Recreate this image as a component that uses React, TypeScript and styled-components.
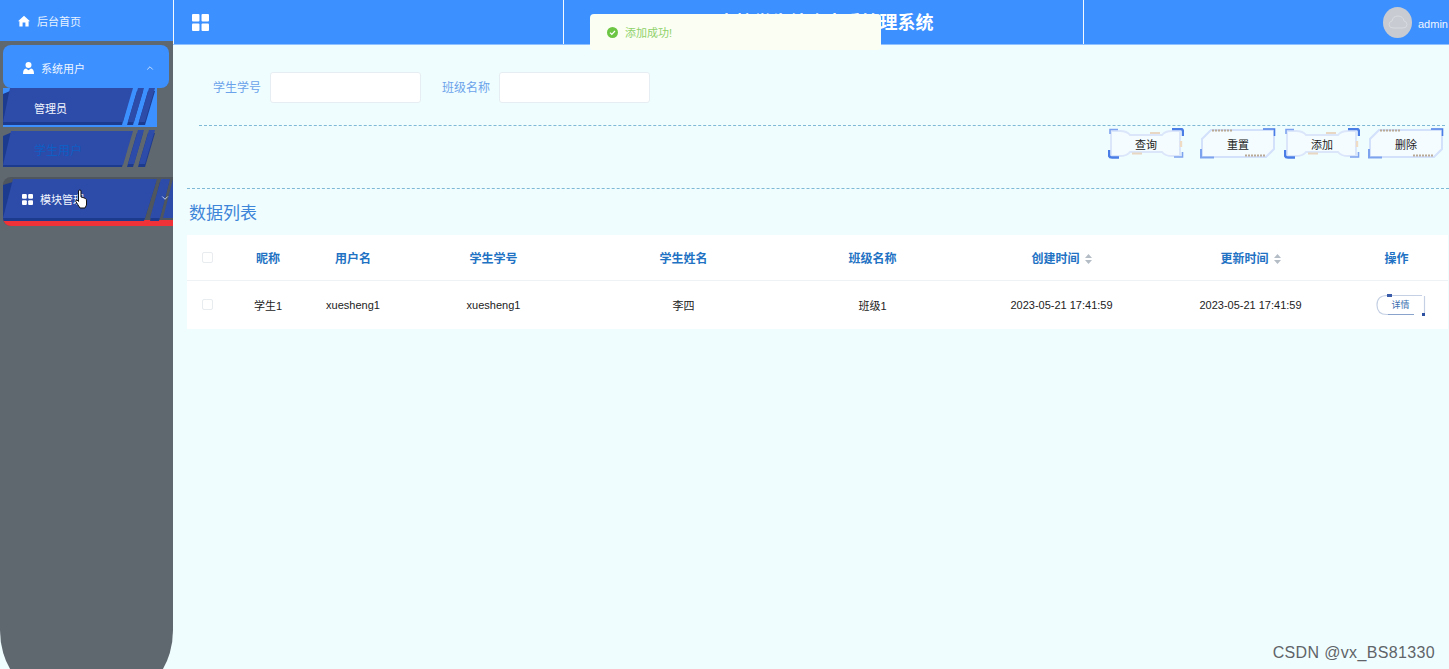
import React from "react";
import styled, { createGlobalStyle } from "styled-components";
import { ChevronDown, ChevronUp } from "lucide-react";

const Global = createGlobalStyle`
  html, body { margin: 0; padding: 0; height: 100%; overflow: hidden; background: #f0fdff; }
  body { font-family: "Liberation Sans", "Noto Sans CJK SC", sans-serif; }
  * { box-sizing: border-box; }
`;

const Page = styled.div`
  position: relative;
  display: flex;
  width: 1449px;
  height: 669px;
  overflow: hidden;
  background: #f0fdff;
`;

const Sidebar = styled.aside`
  flex: 0 0 173px;
  height: 690px;
  background: #5f676f;
  border-radius: 0 0 42px 42px / 0 0 60px 60px;
  color: #fff;
`;

const HomeBar = styled.div`
  display: flex;
  align-items: center;
  gap: 7px;
  height: 41px;
  padding-left: 18px;
  background: #3c90ff;
  font-size: 11px;
  color: #e8f2ff;
`;

const MenuGroup = styled.div`
  padding: 4px 4px 0 3px;
`;

const MenuHead = styled.div`
  display: flex;
  align-items: center;
  height: 43px;
  padding: 3px 14px 0 20px;
  gap: 7px;
  background: #3c90ff;
  border-radius: 8px;
  font-size: 11px;
  color: #eef5ff;
  & > span { flex: 1; }
`;

const SubItem = styled.div<{ $active?: boolean }>`
  position: relative;
  display: flex;
  align-items: center;
  width: 154px;
  height: 39px;
  margin-bottom: 3px;
  padding: 0 0 0 31px;
  background: ${(p) => (p.$active ? "#3c90ff" : "transparent")};
  color: ${(p) => (p.$active ? "#f2f6ff" : "#0f5fc4")};
  font-size: ${(p) => (p.$active ? "11px" : "12px")};
  & > span { position: relative; }
`;

const Drawing = styled.svg`
  position: absolute;
  left: 0;
  top: 0;
`;

const ModuleItem = styled.div`
  position: relative;
  display: flex;
  align-items: center;
  gap: 7px;
  width: 170px;
  height: 49px;
  margin: 8px 0 0 3px;
  padding: 0 0 5px 19px;
  overflow: hidden;
  background: #4f565d;
  border-radius: 8px 0 0 8px;
  font-size: 11px;
  color: #f2f6ff;
  & > span, & > svg.fg { position: relative; }
`;

const ModuleChevron = styled(ChevronDown)`
  position: absolute !important;
  left: 157px;
  top: 16px;
`;

const Cursor = styled.svg`
  position: absolute;
  left: 75px;
  top: 189px;
`;

const Main = styled.main`
  flex: 1;
  min-width: 0;
  display: flex;
  flex-direction: column;
`;

const Header = styled.header`
  display: flex;
  height: 45px;
  background: #3c90ff;
  border-bottom: 1px solid #8fc0ff;
  color: #fff;
`;

const HeaderCell = styled.div<{ $w: number }>`
  flex: 0 0 ${(p) => p.$w}px;
  display: flex;
  align-items: center;
  border-left: 1px solid #f4f9ff;
`;

const MenuCell = styled(HeaderCell)`
  padding-left: 18px;
`;

const TitleCell = styled(HeaderCell)`
  justify-content: center;
  padding: 0 0 3px 4px;
  font-size: 18px;
  font-weight: 700;
`;

const UserCell = styled(HeaderCell)`
  justify-content: flex-end;
  gap: 6px;
  font-size: 11px;
  color: #eef5ff;
  white-space: nowrap;
`;

const Avatar = styled.div`
  width: 29px;
  height: 31px;
  display: flex;
  align-items: center;
  justify-content: center;
  border-radius: 50%;
  background: #c8ccd2;
`;

const AdminName = styled.span`
  width: 31px;
  padding-top: 3px;
`;

const Toast = styled.div`
  position: absolute;
  left: 590px;
  top: 14px;
  width: 291px;
  height: 36px;
  display: flex;
  align-items: center;
  gap: 7px;
  padding-left: 17px;
  background: #fbfff3;
  border-radius: 4px;
  color: #8fd16a;
  font-size: 11px;
`;

const SearchForm = styled.div`
  display: flex;
  margin: 27px 0 0 40px;
`;

const Field = styled.label`
  display: flex;
  align-items: center;
  margin-right: 21px;
  font-size: 12px;
  color: #6ba3ea;
  & > span { margin-right: 9px; padding-bottom: 2px; }
`;

const TextInput = styled.input`
  width: 151px;
  height: 31px;
  border: 1px solid #e6eef3;
  border-radius: 3px;
  background: #fff;
  outline: none;
`;

const Dashed = styled.div<{ $left: number; $right: number; $top: number }>`
  margin: ${(p) => p.$top}px ${(p) => p.$right}px 0 ${(p) => p.$left}px;
  border-top: 1px dashed #7fb9d6;
  height: 1px;
`;

const Actions = styled.div`
  display: flex;
  justify-content: flex-end;
  gap: 8px;
  height: 31px;
  margin-top: 2px;
  padding-right: 5px;
  & > :first-child { margin-right: 8px; }
`;

const FancyButton = styled.button`
  position: relative;
  width: 76px;
  height: 31px;
  padding: 1px 0 0;
  border: 0;
  background: transparent;
  font: 11px "Liberation Sans", "Noto Sans CJK SC", sans-serif;
  color: #222;
  & > span { position: relative; }
`;

const SectionTitle = styled.h2`
  margin: 13px 0 9px 16px;
  font-size: 17px;
  line-height: 24px;
  font-weight: 400;
  color: #3d85d8;
`;

const TableWrap = styled.div`
  margin-left: 14px;
`;

const DataTable = styled.table`
  width: 1261px;
  table-layout: fixed;
  border-collapse: collapse;
  background: #fff;
`;

const Th = styled.th<{ $w?: number }>`
  width: ${(p) => (p.$w ? `${p.$w}px` : "auto")};
  height: 45px;
  padding: 0;
  border-bottom: 1px solid #eef2f5;
  font-size: 12px;
  font-weight: 700;
  color: #2272c4;
  text-align: center;
`;

const Td = styled.td`
  height: 49px;
  padding: 0;
  font-size: 11px;
  color: #222;
  text-align: center;
`;

const Check = styled.span`
  display: block;
  width: 11px;
  height: 11px;
  margin-left: 15px;
  border: 1px solid #e8ecef;
  border-radius: 2px;
  background: #fff;
`;

const Sort = styled.svg`
  margin-left: 5px;
  vertical-align: -1px;
`;

const DetailButton = styled.button`
  position: relative;
  width: 50px;
  height: 22px;
  margin-left: 8px;
  padding: 0;
  border: 0;
  background: transparent;
  font: 9px "Liberation Sans", "Noto Sans CJK SC", sans-serif;
  color: #3b6fb0;
  & > span { position: relative; }
`;

const Watermark = styled.div`
  position: absolute;
  right: 14px;
  bottom: 7px;
  font-size: 16px;
  letter-spacing: 0.35px;
  color: #5f6468;
`;

const ParallelDrawing = ({ active }: { active?: boolean }) => (
  <Drawing width="154" height="39" viewBox="0 0 154 39">
    <g fill="#1c3a8e">
      <polygon points="0,6 7,3 128,3 119,37 0,37" />
      <polygon points="134,3 140,3 130,37 124,37" />
      <polygon points="145,3 152,3 142,37 135,37" />
    </g>
    <g fill="#2d4ba8">
      <polygon points={active ? "7,0 130,0 120,34 0,34" : "8,1 130,1 120,35 0,35"} />
      <polygon points="135,0 141,0 131,34 125,34" />
      <polygon points="146,0 152,0 142,34 136,34" />
    </g>
  </Drawing>
);

const ModuleDrawing = () => (
  <Drawing width="170" height="49" viewBox="0 0 170 49">
    <polygon points="0,43 170,43 170,49 0,49" fill="#ee3237" />
    <g fill="#1c3a8e">
      <polygon points="0,8 10,5 153,5 141,44 0,44" />
      <polygon points="157,5 166,5 156,44 147,44" />
    </g>
    <g fill="#2d4ba8">
      <polygon points="10,2 154,2 142,41 0,41" />
      <polygon points="158,2 167,2 157,41 147,41" />
      <polygon points="170,2 170,41 160,41" />
    </g>
  </Drawing>
);

const GridIcon = ({ size, className }: { size: number; className?: string }) => {
  const cell = size * 0.44;
  const far = size - cell;
  return (
    <svg className={className} width={size} height={size} viewBox={`0 0 ${size} ${size}`} fill="#fff">
      <rect width={cell} height={cell} rx="1" />
      <rect x={far} width={cell} height={cell} rx="1" />
      <rect y={far} width={cell} height={cell} rx="1" />
      <rect x={far} y={far} width={cell} height={cell} rx="1" />
    </svg>
  );
};

const ButtonA = () => (
  <Drawing width="76" height="31" viewBox="0 0 76 31" fill="none">
    <path d="M3 3 H12 Q19 3 22 7 H54 Q57 3 64 3 H72 V28 H64 Q57 28 54 24 H22 Q19 28 12 28 H3 Z" fill="#f4fcff" stroke="#dbe6fb" strokeWidth="2" />
    <path d="M10 1.5 H2 V6" stroke="#7ea3ee" strokeWidth="1.6" />
    <path d="M64 1 H73 Q75 1 75 4 V8" stroke="#4a7de6" strokeWidth="2.4" />
    <path d="M1 22 V27 Q1 29.5 4 29.5 H11" stroke="#4a7de6" strokeWidth="2.4" />
    <path d="M74.5 24 V29 H66" stroke="#7ea3ee" strokeWidth="1.6" />
    <path d="M42 5 H52 M24 25.5 H34" stroke="#e8d7c2" strokeWidth="2" />
    <path d="M73 13 V19" stroke="#f0dcc4" strokeWidth="2.4" />
  </Drawing>
);

const ButtonB = () => (
  <Drawing width="76" height="31" viewBox="0 0 76 31" fill="none">
    <path d="M2 29 V11 L11 2 H74 V21 L66 29 Z" fill="#f4fcff" stroke="#d3e1fb" strokeWidth="2" />
    <path d="M63 1 H74.5 V8" stroke="#4a7de6" strokeWidth="1.6" />
    <path d="M1 21 V29.5 H14" stroke="#7ea3ee" strokeWidth="2" />
    <path d="M12 2.5 H33 M45 27.5 H66" stroke="#b9aa98" strokeWidth="2" strokeDasharray="2 1" />
  </Drawing>
);

const DetailDrawing = () => (
  <Drawing width="50" height="22" viewBox="0 0 50 22" fill="none">
    <path d="M46 1.5 H11 Q1 1.5 1 11 Q1 20.5 11 20.5 H38" stroke="#c5d0e4" strokeWidth="1.2" />
    <path d="M48.5 2 V19" stroke="#c5d0e4" strokeWidth="1.2" />
    <path d="M12 20.5 H38" stroke="#8aa3cc" strokeWidth="1" />
    <rect x="11" y="0" width="5" height="3" fill="#3b5ca8" />
    <rect x="46" y="19" width="3" height="3" fill="#2c4fa0" />
  </Drawing>
);

const SortIcon = () => (
  <Sort width="7" height="10" viewBox="0 0 7 10" fill="#b4bcc6">
    <polygon points="3.5,0 7,4 0,4" />
    <polygon points="0,6 7,6 3.5,10" />
  </Sort>
);

const columns = [
  { label: "昵称", w: 80 },
  { label: "用户名", w: 90 },
  { label: "学生学号", w: 191 },
  { label: "学生姓名", w: 189 },
  { label: "班级名称", w: 189 },
  { label: "创建时间", w: 189, sort: true },
  { label: "更新时间", w: 189, sort: true },
];

const cells = ["学生1", "xuesheng1", "xuesheng1", "李四", "班级1", "2023-05-21 17:41:59", "2023-05-21 17:41:59"];

const buttons = [
  { label: "查询", Art: ButtonA },
  { label: "重置", Art: ButtonB },
  { label: "添加", Art: ButtonA },
  { label: "删除", Art: ButtonB },
];

export default function App() {
  return (
    <Page>
      <Global />
      <Sidebar>
        <HomeBar>
          <svg width="12" height="12" viewBox="0 0 12 12" fill="#fff">
            <path d="M6 .8 12 6.2 10.6 6.2V11.4H7.4V7.6H4.6V11.4H1.4V6.2H0Z" />
          </svg>
          后台首页
        </HomeBar>
        <MenuGroup>
          <MenuHead>
            <svg width="11" height="12" viewBox="0 0 11 12" fill="#fff">
              <circle cx="5.5" cy="3" r="3" />
              <path d="M0 12 Q0 7 3 6.6 L5.5 8.2 8 6.6 Q11 7 11 12Z" />
            </svg>
            <span>系统用户</span>
            <ChevronUp size={10} color="#dcebff" />
          </MenuHead>
          <SubItem $active>
            <ParallelDrawing active />
            <span>管理员</span>
          </SubItem>
          <SubItem>
            <ParallelDrawing />
            <span>学生用户</span>
          </SubItem>
        </MenuGroup>
        <ModuleItem>
          <ModuleDrawing />
          <GridIcon size={11} className="fg" />
          <span>模块管理</span>
          <ModuleChevron size={10} color="#dcebff" />
        </ModuleItem>
      </Sidebar>
      <Main>
        <Header>
          <MenuCell $w={390}>
            <GridIcon size={17} />
          </MenuCell>
          <TitleCell $w={520}>高校学生综合素质管理系统</TitleCell>
          <UserCell $w={366}>
            <Avatar>
              <svg width="20" height="14" viewBox="0 0 20 14" fill="none" stroke="#d8dbe0" strokeWidth="1">
                <path d="M5 13 Q1 13 1 9.5 Q1 6.5 4 6 Q5 1 10 1 Q15 1 16 6 Q19 6.5 19 9.5 Q19 13 15 13Z" />
              </svg>
            </Avatar>
            <AdminName>admin</AdminName>
          </UserCell>
        </Header>
        <SearchForm>
          <Field>
            <span>学生学号</span>
            <TextInput />
          </Field>
          <Field>
            <span>班级名称</span>
            <TextInput />
          </Field>
        </SearchForm>
        <Dashed $left={26} $right={4} $top={22} />
        <Actions>
          {buttons.map(({ label, Art }) => (
            <FancyButton key={label}>
              <Art />
              <span>{label}</span>
            </FancyButton>
          ))}
        </Actions>
        <Dashed $left={14} $right={0} $top={29} />
        <SectionTitle>数据列表</SectionTitle>
        <TableWrap>
          <DataTable>
            <thead>
              <tr>
                <Th $w={41}>
                  <Check />
                </Th>
                {columns.map((c) => (
                  <Th key={c.label} $w={c.w}>
                    {c.label}
                    {c.sort && <SortIcon />}
                  </Th>
                ))}
                <Th>操作</Th>
              </tr>
            </thead>
            <tbody>
              <tr>
                <Td>
                  <Check />
                </Td>
                {cells.map((c, i) => (
                  <Td key={i}>{c}</Td>
                ))}
                <Td>
                  <DetailButton>
                    <DetailDrawing />
                    <span>详情</span>
                  </DetailButton>
                </Td>
              </tr>
            </tbody>
          </DataTable>
        </TableWrap>
      </Main>
      <Toast>
        <svg width="11" height="11" viewBox="0 0 11 11">
          <circle cx="5.5" cy="5.5" r="5.5" fill="#6cc644" />
          <path d="M3 5.6 4.8 7.3 8 4" fill="none" stroke="#fff" strokeWidth="1.2" />
        </svg>
        添加成功!
      </Toast>
      <Cursor width="12" height="20" viewBox="0 0 12 20">
        <path
          d="M3.5 1.5 Q5 .5 6 1.5 V8 L8 8.5 L10.5 9.5 Q11.5 10 11.5 12 V16 L10 19 H5 L.8 12.5 Q.5 11 2 11 L3.5 12.5Z"
          fill="#fff"
          stroke="#111"
          strokeWidth="1"
        />
      </Cursor>
      <Watermark>CSDN @vx_BS81330</Watermark>
    </Page>
  );
}
